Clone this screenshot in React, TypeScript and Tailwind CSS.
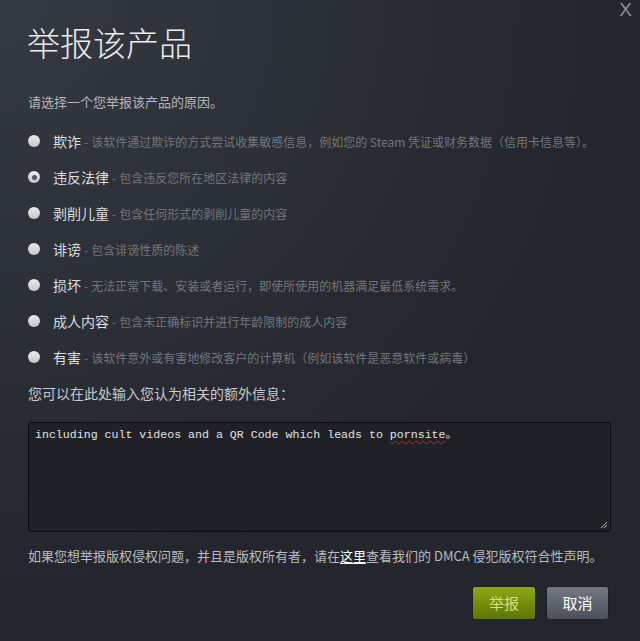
const reasons = [
  { label: "欺诈", desc: "该软件通过欺诈的方式尝试收集敏感信息，例如您的 Steam 凭证或财务数据（信用卡信息等）。" },
  { label: "违反法律", desc: "包含违反您所在地区法律的内容", checked: true },
  { label: "剥削儿童", desc: "包含任何形式的剥削儿童的内容" },
  { label: "诽谤", desc: "包含诽谤性质的陈述" },
  { label: "损坏", desc: "无法正常下载、安装或者运行，即使所使用的机器满足最低系统需求。" },
  { label: "成人内容", desc: "包含未正确标识并进行年龄限制的成人内容" },
  { label: "有害", desc: "该软件意外或有害地修改客户的计算机（例如该软件是恶意软件或病毒）" },
]

function Radio({ checked }: { checked?: boolean }) {
  return (
    <span className="w-[12px] h-[12px] shrink-0 rounded-full bg-gradient-to-b from-[#ececec] to-[#c4c4c4] flex items-center justify-center">
      {checked && <span className="w-[5px] h-[5px] rounded-full bg-[#55575a]" />}
    </span>
  )
}

export default function App() {
  return (
    <div
      className="relative w-[640px] h-[641px] overflow-hidden bg-[#23262c] bg-[radial-gradient(circle_at_top_left,rgba(74,81,92,0.45)_0%,rgba(75,81,92,0)_65%)] pl-[28px] pr-[29px] pt-[22px]"
      style={{ fontFamily: '"Noto Sans CJK SC", "Liberation Sans", sans-serif' }}
    >
      {/* Close */}
      <div className="absolute top-0 right-[8px] text-[19px] leading-[20px] text-[#8b8f95] font-['Liberation_Sans',sans-serif]">
        X
      </div>

      <h1 className="text-[33px] leading-[40px] text-[#eceded] font-light -ml-px">举报该产品</h1>

      <p className="mt-[30px] text-[13px] leading-[20px] text-[#b3b7bc]">请选择一个您举报该产品的原因。</p>

      <div className="mt-[19px] flex flex-col gap-[16px]">
        {reasons.map((r) => (
          <div key={r.label} className="flex items-center gap-[13px] h-[20px] whitespace-nowrap">
            <Radio checked={r.checked} />
            <div className="leading-[20px]">
              <span className="text-[14px] text-[#dcdee0]">{r.label}</span>
              <span className="text-[12px] text-[#72767c] px-[3px]">-</span>
              <span className="text-[12px] text-[#72767c]">{r.desc}</span>
            </div>
          </div>
        ))}
      </div>

      <p className="mt-[16px] text-[14px] leading-[20px] text-[#c8cacd]">您可以在此处输入您认为相关的额外信息：</p>

      <div className="relative mt-[19px] h-[110px] rounded-[3px] border border-[#0b0c0e] bg-[#1f2126] px-[6px] pt-[4px]">
        <div className="text-[11.6px] leading-[16px] text-[#e2e2e2] whitespace-nowrap" style={{ fontFamily: '"Liberation Mono", "Noto Sans CJK SC", monospace' }}>
          including cult videos and a QR Code which leads to{" "}
          <span className="underline decoration-wavy decoration-[#d02020] decoration-1 underline-offset-2">pornsite</span>。
        </div>
        <svg className="absolute right-[2px] bottom-[2px]" width="8" height="8" viewBox="0 0 8 8">
          <path d="M7 1 L1 7 M7 4 L4 7" stroke="#b8b8b8" strokeWidth="1" />
        </svg>
      </div>

      <p className="mt-[14px] text-[13px] leading-[20px] text-[#b9bcc0] whitespace-nowrap">
        如果您想举报版权侵权问题，并且是版权所有者，请在<span className="text-white underline underline-offset-2">这里</span>查看我们的 DMCA 侵犯版权符合性声明。
      </p>

      <div className="mt-[21px] flex justify-end gap-[12px] pr-[3px]">
        <button className="w-[62px] h-[32px] rounded-[2px] bg-gradient-to-b from-[#8fa815] to-[#5b7506] text-[15px] text-[#cfe37e] shadow-[0_0_2px_rgba(0,0,0,0.5)]">
          举报
        </button>
        <button className="w-[61px] h-[32px] rounded-[2px] bg-gradient-to-b from-[#737a85] to-[#4b5059] text-[15px] text-white shadow-[0_0_2px_rgba(0,0,0,0.5)]">
          取消
        </button>
      </div>
    </div>
  )
}
